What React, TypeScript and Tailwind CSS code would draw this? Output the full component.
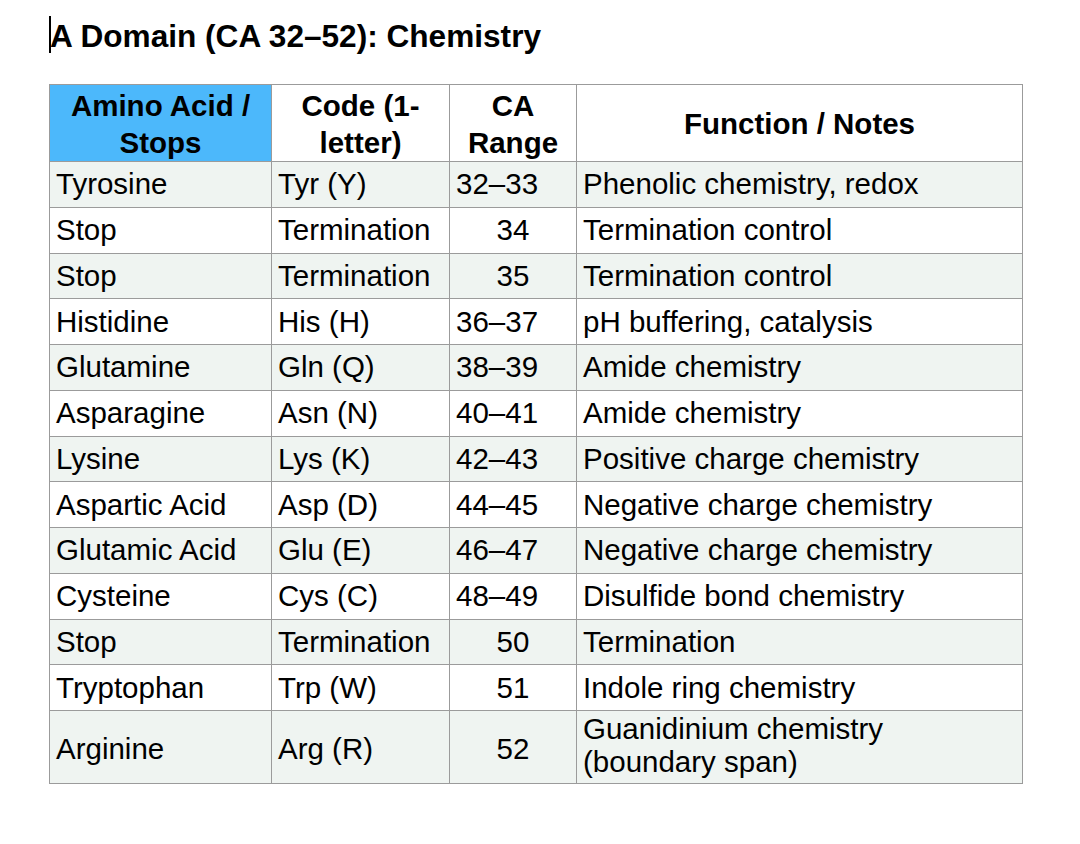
import React from 'react';

type Row = {
  name: string;
  code: string;
  range: string;
  notes: React.ReactNode;
};

const rows: Row[] = [
  { name: 'Tyrosine', code: 'Tyr (Y)', range: '32–33', notes: 'Phenolic chemistry, redox' },
  { name: 'Stop', code: 'Termination', range: '34', notes: 'Termination control' },
  { name: 'Stop', code: 'Termination', range: '35', notes: 'Termination control' },
  { name: 'Histidine', code: 'His (H)', range: '36–37', notes: 'pH buffering, catalysis' },
  { name: 'Glutamine', code: 'Gln (Q)', range: '38–39', notes: 'Amide chemistry' },
  { name: 'Asparagine', code: 'Asn (N)', range: '40–41', notes: 'Amide chemistry' },
  { name: 'Lysine', code: 'Lys (K)', range: '42–43', notes: 'Positive charge chemistry' },
  { name: 'Aspartic Acid', code: 'Asp (D)', range: '44–45', notes: 'Negative charge chemistry' },
  { name: 'Glutamic Acid', code: 'Glu (E)', range: '46–47', notes: 'Negative charge chemistry' },
  { name: 'Cysteine', code: 'Cys (C)', range: '48–49', notes: 'Disulfide bond chemistry' },
  { name: 'Stop', code: 'Termination', range: '50', notes: 'Termination' },
  { name: 'Tryptophan', code: 'Trp (W)', range: '51', notes: 'Indole ring chemistry' },
  {
    name: 'Arginine',
    code: 'Arg (R)',
    range: '52',
    notes: (
      <>
        Guanidinium chemistry
        <br />
        (boundary span)
      </>
    ),
  },
];

const cell = 'border border-[#9b9b9b] px-[6px] align-middle';

const App = () => {
  return (
    <div className="min-h-[844px] w-[1080px] bg-white pl-[49px] pt-[18px] text-black font-['Liberation_Sans',Arial,sans-serif]">
      {/* Heading with text caret */}
      <h1 className="relative text-[31.6px] font-bold leading-[37px] pl-[1px]">
        <span className="absolute left-0 top-[-2px] h-[37px] w-[1.5px] bg-black" />
        A Domain (CA 32–52): Chemistry
      </h1>

      <table className="mt-[29px] w-[973px] table-fixed border-collapse text-[29.5px]">
        <colgroup>
          <col className="w-[222px]" />
          <col className="w-[178px]" />
          <col className="w-[127px]" />
          <col className="w-[446px]" />
        </colgroup>
        <thead>
          <tr className="h-[77px] font-bold text-center leading-[36.5px]">
            <th className={`${cell} pt-[3px] pb-0 bg-[#4cb8fb]`}>
              Amino Acid /
              <br />
              Stops
            </th>
            <th className={`${cell} pt-[3px] pb-0`}>
              Code (1-
              <br />
              letter)
            </th>
            <th className={`${cell} pt-[3px] pb-0`}>
              CA
              <br />
              Range
            </th>
            <th className={`${cell} pt-[3px] pb-0`}>Function / Notes</th>
          </tr>
        </thead>
        <tbody>
          {rows.map((r, i) => {
            const last = i === rows.length - 1;
            const shaded = i % 2 === 0;
            const isRange = r.range.includes('–');
            const pad = last ? 'pt-[4px] pb-0 leading-[34px]' : 'py-0 leading-[34px]';
            return (
              <tr
                key={i}
                className={`${last ? 'h-[73px]' : 'h-[45.75px]'} ${shaded ? 'bg-[#eff4f1]' : 'bg-white'}`}
              >
                <td className={`${cell} ${pad}`}>{r.name}</td>
                <td className={`${cell} ${pad}`}>{r.code}</td>
                <td className={`${cell} ${pad} ${isRange ? 'text-left' : 'text-center'}`}>{r.range}</td>
                <td className={`${cell} ${last ? 'pt-0 pb-[4px] leading-[33px]' : pad}`}>{r.notes}</td>
              </tr>
            );
          })}
        </tbody>
      </table>
    </div>
  );
};

export default App;
